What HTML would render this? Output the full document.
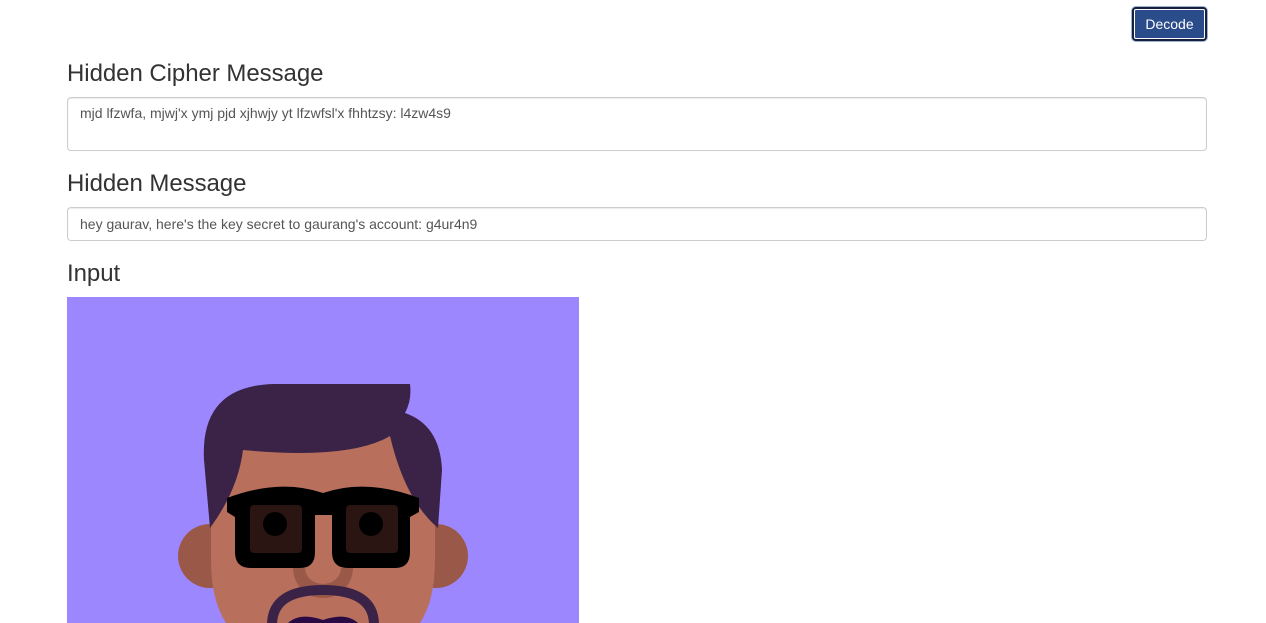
<!DOCTYPE html>
<html><head><meta charset="utf-8"><style>
body{margin:0;width:1266px;height:623px;overflow:hidden;background:#fff;font-family:"Liberation Sans",sans-serif;color:#333;position:relative}
.h{position:absolute;left:67px;font-size:24px;font-weight:400;color:#333;margin:0;letter-spacing:-0.05px}
.box{position:absolute;left:67px;width:1140px;box-sizing:border-box;border:1px solid #ccc;border-radius:4px;font-size:14px;color:#555;padding:0 12px;box-shadow:inset 0 1px 1px rgba(0,0,0,.075)}
.btn{position:absolute;left:1132px;top:7px;width:75px;height:34px;box-sizing:border-box;background:#2b4c8a;border:2px solid #16213a;outline:1px solid #fff;outline-offset:-3px;border-radius:4px;color:#fff;font-size:14px;text-align:center;line-height:30px;box-shadow:0 0 0 1px #9fb0d0}
</style></head><body>
<div class="btn">Decode</div>
<div class="h" style="top:60px">Hidden Cipher Message</div>
<div class="box" style="top:97px;height:54px;padding-top:7px">mjd lfzwfa, mjwj'x ymj pjd xjhwjy yt lfzwfsl'x fhhtzsy: l4zw4s9</div>
<div class="h" style="top:170px">Hidden Message</div>
<div class="box" style="top:207px;height:34px;line-height:32px">hey gaurav, here's the key secret to gaurang's account: g4ur4n9</div>
<div class="h" style="top:260px">Input</div>
<svg style="position:absolute;left:67px;top:297px" width="512" height="326" viewBox="67 297 512 326">
<rect x="67" y="297" width="512" height="326" fill="#9d87fe"/>
<circle cx="210" cy="556" r="32" fill="#9a5848"/>
<circle cx="436" cy="556" r="32" fill="#9a5848"/>
<path d="M211 450 Q230 430 323 430 Q416 430 435 450 L435 560 Q435 600 420 623 L226 623 Q211 600 211 560Z" fill="#b86f5c"/>
<path d="M204 460 Q200 385 275 384 L410 384 Q412 400 405 413 Q440 425 442 470 L438 528 Q405 500 390 436 Q350 460 243 450 Q238 490 210 528Z" fill="#3a2347"/>
<path d="M227 498 Q280 478 323 493 Q366 478 419 498 L419 512 L410 517 L410 552 Q410 568 395 568 L348 568 Q332 568 332 552 L332 515 L315 515 L315 552 Q315 568 300 568 L251 568 Q235 568 235 552 L235 517 L227 512Z" fill="#000"/>
<rect x="250" y="505" width="52" height="48" rx="4" fill="#2a1512"/>
<rect x="346" y="505" width="52" height="48" rx="4" fill="#2a1512"/>
<circle cx="275" cy="524" r="12" fill="#000"/>
<circle cx="371" cy="524" r="12" fill="#000"/>
<path d="M293 568 A30 30 0 0 0 353 568Z" fill="#9a5848"/>
<path d="M305 568 A18 16 0 0 0 341 568Z" fill="#b86f5c"/>
<path d="M272 625 Q272 590 323 590 Q374 590 374 625" fill="none" stroke="#3a2347" stroke-width="10"/>
<path d="M288 623 Q300 612 323 620 Q346 612 358 623Z" fill="#2a0a45"/>
</svg>
</body></html>
